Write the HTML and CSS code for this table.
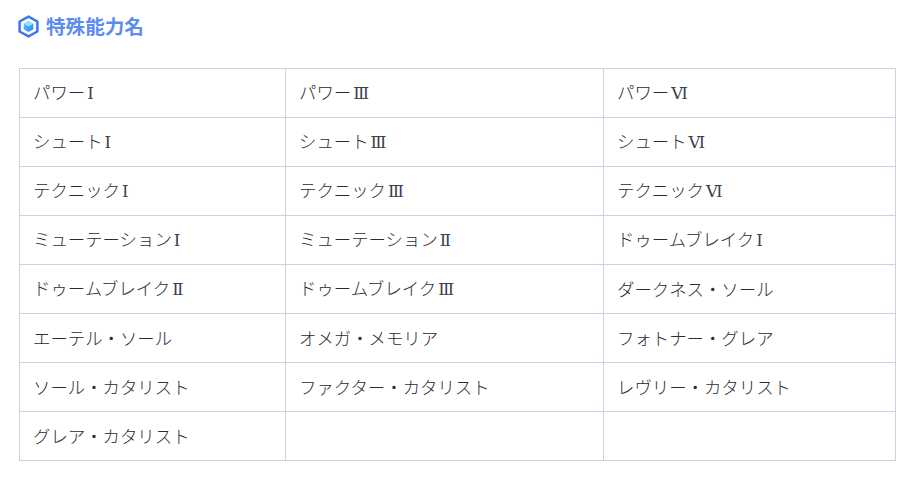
FILE: index.html
```html
<!DOCTYPE html>
<html lang="ja">
<head>
<meta charset="utf-8">
<link rel="stylesheet" href="styles.css">
</head>
<body>
<div class="page">
  <h2 class="title">
    <svg class="icon" width="21" height="23" viewBox="0 0 20 22">
      <defs>
        <linearGradient id="g" x1="0" y1="0" x2="1" y2="1">
          <stop offset="0" stop-color="#5ad0ff"/>
          <stop offset="1" stop-color="#2f7cf0"/>
        </linearGradient>
      </defs>
      <polygon points="10,1.5 18.5,6.2 18.5,15.8 10,20.5 1.5,15.8 1.5,6.2" fill="none" stroke="#3f74ee" stroke-width="2.4" stroke-linejoin="round"/>
      <polygon points="10,5.8 14.6,8.4 14.6,13.6 10,16.2 5.4,13.6 5.4,8.4" fill="url(#g)"/>
      <polygon points="10,5.8 14.6,8.4 10,11 5.4,8.4" fill="#8fe3ff"/>
    </svg>
    <span>特殊能力名</span>
  </h2>
  <table class="grid">
    <colgroup>
      <col class="c1"><col class="c2"><col class="c3">
    </colgroup>
    <tbody>
      <tr><td>パワー<span class="num">Ⅰ</span></td><td>パワー<span class="num">Ⅲ</span></td><td>パワー<span class="num">Ⅵ</span></td></tr>
      <tr><td>シュート<span class="num">Ⅰ</span></td><td>シュート<span class="num">Ⅲ</span></td><td>シュート<span class="num">Ⅵ</span></td></tr>
      <tr><td>テクニック<span class="num">Ⅰ</span></td><td>テクニック<span class="num">Ⅲ</span></td><td>テクニック<span class="num">Ⅵ</span></td></tr>
      <tr><td>ミューテーション<span class="num">Ⅰ</span></td><td>ミューテーション<span class="num">Ⅱ</span></td><td>ドゥームブレイク<span class="num">Ⅰ</span></td></tr>
      <tr><td>ドゥームブレイク<span class="num">Ⅱ</span></td><td>ドゥームブレイク<span class="num">Ⅲ</span></td><td>ダークネス・ソール</td></tr>
      <tr><td>エーテル・ソール</td><td>オメガ・メモリア</td><td>フォトナー・グレア</td></tr>
      <tr><td>ソール・カタリスト</td><td>ファクター・カタリスト</td><td>レヴリー・カタリスト</td></tr>
      <tr><td>グレア・カタリスト</td><td></td><td></td></tr>
    </tbody>
  </table>
</div>
</body>
</html>
```
FILE: styles.css
```css
html, body {
  margin: 0;
  padding: 0;
  background: #ffffff;
}
body {
  font-family: "Noto Sans CJK JP", "Noto Sans", sans-serif;
  color: #333a44;
}
.page {
  padding: 14px 28px 0 18px;
}
.title {
  display: flex;
  align-items: center;
  gap: 7px;
  margin: 0 0 30px 0;
  height: 24px;
  font-size: 19.6px;
  font-weight: 700;
  color: #5b8cf0;
  line-height: 24px;
}
.icon {
  display: block;
  flex: none;
}
.grid {
  border-collapse: collapse;
  table-layout: fixed;
  width: 876px;
  margin-left: 1px;
}
.c1 { width: 266px; }
.c2 { width: 318px; }
.c3 { width: 292px; }
.grid td {
  border: 1px solid #c9d3e1;
  height: 48px;
  padding: 0 13px;
  font-size: 17.4px;
  font-weight: 300;
  line-height: 20px;
  vertical-align: middle;
  color: #262d3b;
}
.num {
  font-family: "Liberation Serif", "DejaVu Serif", serif;
  font-size: 16.5px;
  font-weight: 400;
  margin-left: 2px;
  color: #3a4150;
}
```
